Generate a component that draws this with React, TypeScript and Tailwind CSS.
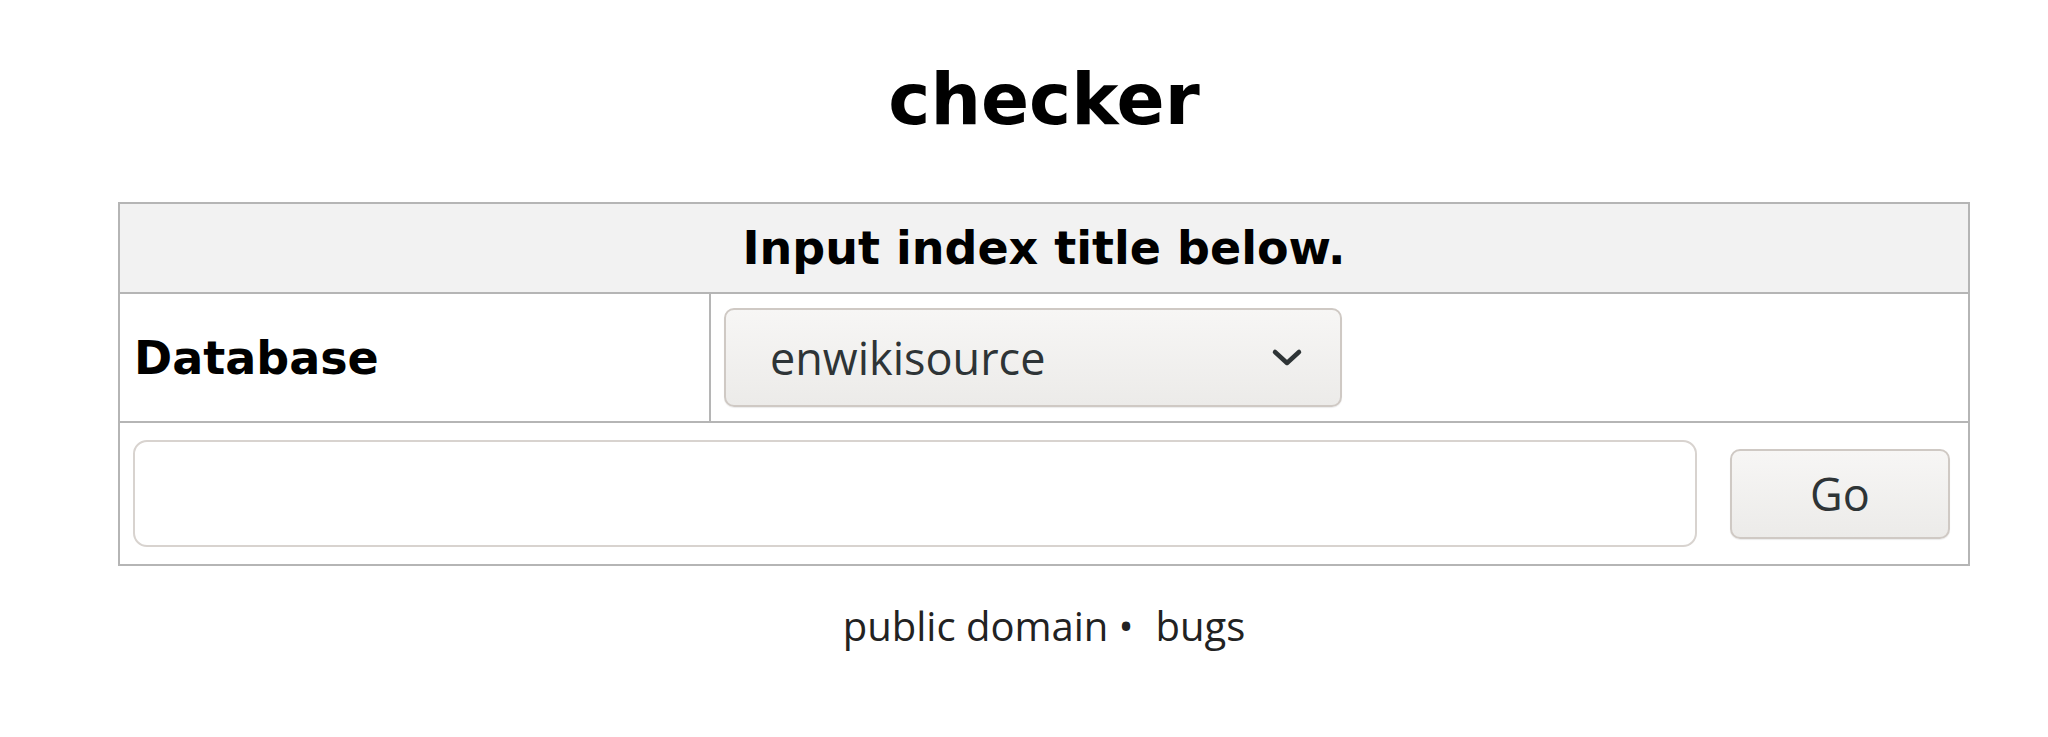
import React from "react";

const dejavu = "font-['DejaVu_Sans',sans-serif]";
const ui = "font-['Open_Sans',sans-serif]";

function Chevron() {
  return (
    <svg width="34" height="20" viewBox="0 0 34 20" fill="none" className="shrink-0">
      <path d="M5 4 L17 15 L29 4" stroke="#2e3436" strokeWidth="4.5" strokeLinecap="round" strokeLinejoin="round" />
    </svg>
  );
}

export default function App() {
  return (
    <div className={`w-[2048px] h-[737px] bg-white overflow-hidden ${dejavu}`}>
      <div className="ml-[118px] w-[1852px] flex flex-col items-center">
        {/* Title */}
        <h1 className="mt-[60px] text-[71px] leading-[80px] font-bold text-black">checker</h1>

        {/* Form table */}
        <div className="mt-[62px] w-full border-2 border-[#b5b5b5] flex flex-col">
          <div className="h-[90px] bg-[#f2f2f2] border-b-2 border-[#b5b5b5] flex items-center justify-center">
            <span className="text-[46px] font-bold text-black leading-none">Input index title below.</span>
          </div>

          <div className="h-[129px] border-b-2 border-[#b5b5b5] flex">
            <div className="w-[591px] border-r-2 border-[#b5b5b5] flex items-center pl-[14px]">
              <span className="text-[46px] font-bold text-black leading-none">Database</span>
            </div>
            <div className="flex items-center pl-[13px]">
              <div className="w-[618px] h-[99px] rounded-[10px] border-2 border-[#cfc9c4] bg-gradient-to-b from-[#f7f6f5] to-[#ecebe9] shadow-[0_1px_1px_rgba(0,0,0,0.08)] flex items-center justify-between pl-[44px] pr-[36px]">
                <span className={`${ui} text-[45px] text-[#2e3436] leading-none`}>enwikisource</span>
                <Chevron />
              </div>
            </div>
          </div>

          <div className="h-[141px] flex items-center pl-[13px] gap-[33px]">
            <div className="w-[1564px] h-[107px] rounded-[14px] border-2 border-[#d8d3cf] bg-white" />
            <div className="w-[220px] h-[90px] rounded-[10px] border-2 border-[#cfc9c4] bg-gradient-to-b from-[#f7f6f5] to-[#ecebe9] shadow-[0_1px_1px_rgba(0,0,0,0.08)] flex items-center justify-center">
              <span className={`${ui} text-[45px] text-[#2e3436] leading-none`}>Go</span>
            </div>
          </div>
        </div>

        {/* Footer */}
        <div className={`${ui} mt-[35px] text-[40px] leading-[50px] text-[#222]`}>
          <span>public domain</span>
          <span className="ml-[10px]">•</span>
          <span className="ml-[22px]">bugs</span>
        </div>
      </div>
    </div>
  );
}
